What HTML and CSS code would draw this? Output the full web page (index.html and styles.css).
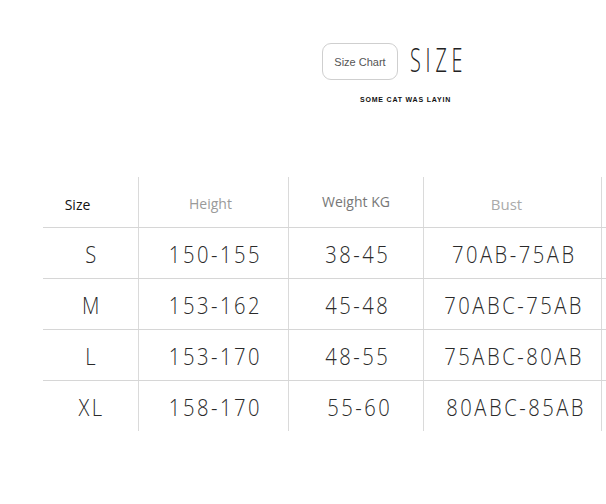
FILE: index.html
```html
<!DOCTYPE html>
<html>
<head>
<meta charset="utf-8">
<link rel="stylesheet" href="styles.css">
</head>
<body>
<div class="page">
  <header class="title">
    <div class="title-row">
      <span class="chip">Size Chart</span>
      <span class="size-word">SIZE</span>
    </div>
    <div class="tagline">SOME CAT WAS LAYIN</div>
  </header>
  <div class="table">
    <div class="row head">
      <div class="cell c-size">Size</div>
      <div class="cell c-height">Height</div>
      <div class="cell c-weight">Weight KG</div>
      <div class="cell c-bust">Bust</div>
      <div class="cell tail"></div>
    </div>
    <div class="row data">
      <div class="cell"><span class="v">S</span></div>
      <div class="cell"><span class="v">150-155</span></div>
      <div class="cell"><span class="v">38-45</span></div>
      <div class="cell"><span class="v">70AB-75AB</span></div>
      <div class="cell tail"></div>
    </div>
    <div class="row data">
      <div class="cell"><span class="v">M</span></div>
      <div class="cell"><span class="v">153-162</span></div>
      <div class="cell"><span class="v">45-48</span></div>
      <div class="cell"><span class="v">70ABC-75AB</span></div>
      <div class="cell tail"></div>
    </div>
    <div class="row data">
      <div class="cell"><span class="v">L</span></div>
      <div class="cell"><span class="v">153-170</span></div>
      <div class="cell"><span class="v">48-55</span></div>
      <div class="cell"><span class="v">75ABC-80AB</span></div>
      <div class="cell tail"></div>
    </div>
    <div class="row data last">
      <div class="cell"><span class="v">XL</span></div>
      <div class="cell"><span class="v">158-170</span></div>
      <div class="cell shift"><span class="v">55-60</span></div>
      <div class="cell shift"><span class="v">80ABC-85AB</span></div>
      <div class="cell tail"></div>
    </div>
  </div>
</div>
</body>
</html>
```

FILE: styles.css
```css
html, body {
  margin: 0;
  padding: 0;
  background: #ffffff;
}

.page {
  width: 606px;
  height: 504px;
  overflow: hidden;
  padding-top: 43px;
  box-sizing: border-box;
  font-family: "Open Sans", "Liberation Sans", sans-serif;
}

.title {
  padding-left: 322px;
}

.title-row {
  display: flex;
  align-items: center;
  gap: 12px;
}

.chip {
  width: 76px;
  height: 37px;
  box-sizing: border-box;
  border: 1px solid #cfcfcf;
  border-radius: 9px;
  display: flex;
  align-items: center;
  justify-content: center;
  font-family: "Liberation Sans", Arial, sans-serif;
  font-size: 11px;
  color: #555;
}

.size-word {
  display: inline-block;
  font-family: "Open Sans", "Liberation Sans", sans-serif;
  font-weight: 300;
  font-size: 33px;
  line-height: 32px;
  letter-spacing: 8px;
  color: #222;
  transform: scaleX(0.6);
  transform-origin: left center;
  margin-top: -3px;
}

.tagline {
  margin-top: 16px;
  margin-left: 38px;
  font-family: "Liberation Sans", Arial, sans-serif;
  font-weight: bold;
  font-size: 7px;
  letter-spacing: 0.8px;
  color: #111;
  line-height: 8px;
}

.table {
  margin-top: 73px;
  margin-left: 43px;
  width: 563px;
}

.row {
  display: grid;
  grid-template-columns: 96px 150px 135px 178px 1fr;
  border-bottom: 1px solid #d6d6d6;
}

.row.head {
  height: 51px;
  box-sizing: border-box;
}

.row.data {
  height: 51px;
  box-sizing: border-box;
}

.row.last {
  border-bottom: none;
  height: 50px;
}

.cell {
  display: flex;
  align-items: center;
  justify-content: center;
  border-right: 1px solid #dadada;
}

.cell.tail {
  border-right: none;
}

.head .cell {
  font-size: 14px;
  font-weight: 400;
}

.head .c-size {
  color: #111;
  padding-right: 26px;
  padding-top: 5px;
}

.head .c-height {
  color: #9a9a9a;
  padding-right: 6px;
  padding-top: 2px;
}

.head .c-weight {
  color: #777;
  padding-bottom: 1px;
}

.head .c-bust {
  color: #aaa;
  padding-right: 12px;
  padding-top: 4px;
  font-size: 15px;
}

.data .cell {
  font-size: 24px;
  font-weight: 300;
  color: #2a2a2a;
}

.v {
  display: inline-block;
  letter-spacing: 3px;
  margin-right: -3px;
  transform: scaleX(0.84);
}

.data .cell.shift {
  padding-left: 5px;
}
```
